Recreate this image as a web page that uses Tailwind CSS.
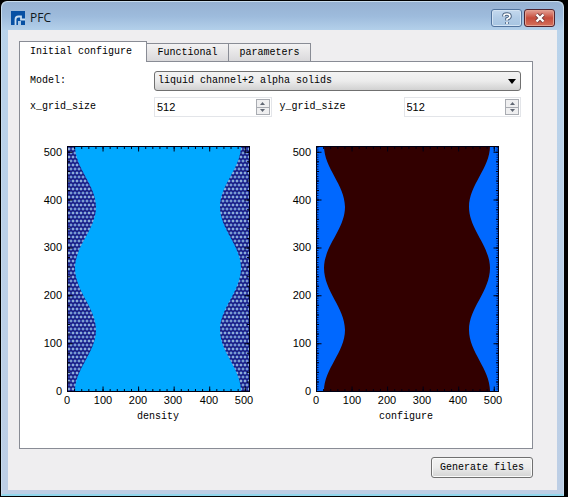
<!DOCTYPE html>
<html lang="en">
<head>
<meta charset="utf-8">
<title>PFC</title>
<script src="https://cdn.jsdelivr.net/npm/@tailwindcss/browser@4"></script>
</head>
<body class="bg-black font-['Liberation_Mono',monospace] text-[10px] leading-4 text-black">
<svg class="absolute size-0" aria-hidden="true">
  <defs>
    <pattern id="lattice" width="4" height="8" patternUnits="userSpaceOnUse" x="37" y="11">
      <rect width="4" height="8" fill="#141c70"/>
      <path d="M1 0H3V1H1ZM0 1H1V3H0ZM3 1H4V3H3ZM1 3H3V4H1Z" fill="#2c48a8"/>
      <rect x="1" y="1" width="2" height="2" fill="#9cc4dc"/>
      <path d="M0 4H1V5H0ZM3 4H4V5H3ZM1 5H3V7H1ZM0 7H1V8H0ZM3 7H4V8H3Z" fill="#2c48a8"/>
      <path d="M0 5H1V7H0ZM3 5H4V7H3Z" fill="#86b0d4"/>
    </pattern>
    <path id="solids" d="M37 10H45C45 32 66 49 66 71C66 93 45 110 45 132C45 155 66 172 66 194C66 216 45 233 45 255H37ZM219 10H211C211 32 190 49 190 71C190 93 211 110 211 132C211 155 190 172 190 194C190 216 211 233 211 255H219Z"/>
    <g id="axes" fill="none" stroke="#000014">
      <path d="M37.500 257V10M219.500 257V10" stroke-width="5" stroke-dasharray="1 8.570" stroke-dashoffset="-1"/>
      <path d="M37.500 257V10M219.500 257V10" stroke-width="10" stroke-dasharray="1 46.850" stroke-dashoffset="-1"/>
      <path d="M37 10.500H219M37 255.500H219" stroke-width="5" stroke-dasharray="1 6.110"/>
      <path d="M37 10.500H219M37 255.500H219" stroke-width="10" stroke-dasharray="1 34.550"/>
    </g>
    <clipPath id="frame"><rect x="37" y="10" width="183" height="246"/></clipPath>
    <g id="labels" font-family="Liberation Sans, Arial, sans-serif" font-size="11">
      <g text-anchor="end">
        <text x="32" y="20">500</text><text x="32" y="68">400</text><text x="32" y="115">300</text>
        <text x="32" y="163">200</text><text x="32" y="211">100</text><text x="32" y="259">0</text>
      </g>
      <g text-anchor="middle">
        <text x="37" y="268">0</text><text x="73" y="268">100</text><text x="108" y="268">200</text>
        <text x="143" y="268">300</text><text x="179" y="268">400</text><text x="214" y="268">500</text>
      </g>
    </g>
  </defs>
</svg>

<div class="mt-px mr-[4px] ml-px flex min-h-[calc(100vh-2px)] flex-col rounded-t-md border border-b-2 border-[#c8dced] border-b-[#91d7ed] bg-linear-to-b from-[#b9d3eb] to-[#bdcee5] px-[6px] pb-1">
  <header class="-mx-[6px] flex h-7 items-center rounded-t-md bg-linear-to-b from-[#96b1d2] via-[#9dbbdc] to-[#b3d0ea] pr-2 pl-[9px]">
    <svg class="mt-[4px] size-[14px]" viewBox="0 0 14 14" aria-hidden="true">
      <path d="M0 0H14V14H0Z" fill="#0750a3"/>
      <path d="M4.500 14V8.500Q4.500 5.500 7.500 5.500H10V8.500H14" fill="none" stroke="#c6dcf0" stroke-width="1.800"/>
      <path d="M7 10H10V14H7Z" fill="#a9c8e6"/>
    </svg>
    <h1 class="mt-1 ml-[5px] font-['Open_Sans',sans-serif] text-xs text-[#101820]">PFC</h1>
    <div class="mt-1 ml-auto flex gap-[2px]">
      <button type="button" aria-label="Help" class="flex h-[18px] w-[31px] items-center justify-center rounded-[3px] border border-[#52749e] bg-linear-to-b from-[#c5d9ee] via-[#b1cbe6] via-50% to-[#a7c5e2] shadow-[inset_0_0_0_1px_#d3e3f3]">
        <svg class="h-[13px] w-[10px]" viewBox="0 0 10 13" fill="none" aria-hidden="true">
          <path d="M2 4.500V3.500Q2 2 5 2T8 4.500Q8 6 5 7V8.500M5 10V12" stroke="#48607f" stroke-width="3.500"/>
          <path d="M2 4.500V3.500Q2 2 5 2T8 4.500Q8 6 5 7V8.500M5 10V12" stroke="#fff" stroke-width="1.700"/>
        </svg>
      </button>
      <button type="button" aria-label="Close" class="flex h-[18px] w-[31px] items-center justify-center rounded-[3px] border border-[#50232e] bg-linear-to-b from-[#e3a096] via-[#c54b3b] via-50% to-[#d5705c] shadow-[inset_0_0_0_1px_#e3a090]">
        <svg class="h-[10px] w-3" viewBox="0 0 12 10" fill="none" aria-hidden="true">
          <path d="M2.500 1.500L9.500 8.500M9.500 1.500L2.500 8.500" stroke="#713d40" stroke-width="4"/>
          <path d="M2.500 1.500L9.500 8.500M9.500 1.500L2.500 8.500" stroke="#fff" stroke-width="2.400"/>
        </svg>
      </button>
    </div>
  </header>

  <main class="flex flex-1 flex-col bg-[#efeef0] pt-[11px] pr-6 pb-3 pl-[11px]">
    <div role="tablist" class="flex items-end">
      <button type="button" role="tab" aria-selected="true" class="relative -mb-px h-[21px] w-32 border border-b-0 border-[#898c95] bg-white pr-1">Initial configure</button>
      <button type="button" role="tab" aria-selected="false" class="h-[18px] w-[82px] border border-b-0 border-l-0 border-[#898c95] bg-linear-to-b from-[#f3f2f3] to-[#dad9db]">Functional</button>
      <button type="button" role="tab" aria-selected="false" class="h-[18px] w-[82px] border border-b-0 border-l-0 border-[#898c95] bg-linear-to-b from-[#f3f2f3] to-[#dad9db]">parameters</button>
    </div>

    <section role="tabpanel" class="flex-1 border border-[#898c95] bg-white pt-[9px] pr-[11px] pl-[10px]">
      <form class="grid grid-cols-[124px_minmax(0,1fr)_132px_minmax(0,1fr)] items-center gap-y-[6px]">
        <label for="model">Model:</label>
        <div class="relative col-span-3">
          <select id="model" class="block h-5 w-full appearance-none rounded-[3px] border border-[#707070] bg-linear-to-b from-[#f3f3f3] via-[#ececec] to-[#d1d1d1] px-[3px]">
            <option>liquid channel+2 alpha solids</option>
          </select>
          <svg class="pointer-events-none absolute top-2 right-[5px] h-[5px] w-2" viewBox="0 0 8 5" aria-hidden="true"><path d="M0 0H8L4 5Z"/></svg>
        </div>
        <label for="xgrid">x_grid_size</label>
        <div class="flex h-5 border border-[#e3e5e9] bg-white">
          <input id="xgrid" type="text" inputmode="numeric" value="512" class="min-w-0 flex-1 px-[2px] font-['Liberation_Sans',Arial,sans-serif] text-[11px] outline-none">
          <div class="mr-px flex w-[14px] flex-col py-px">
            <button type="button" aria-label="Increase x_grid_size" class="flex flex-1 items-center justify-center border border-[#a9acb2] bg-[#efeff0]"><svg class="h-[3px] w-[5px]" viewBox="0 0 5 3"><path d="M0 3L2.500 0L5 3Z" fill="#606773"/></svg></button>
            <button type="button" aria-label="Decrease x_grid_size" class="flex flex-1 items-center justify-center border border-t-0 border-[#a9acb2] bg-[#efeff0]"><svg class="h-[3px] w-[5px]" viewBox="0 0 5 3"><path d="M0 0H5L2.500 3Z" fill="#606773"/></svg></button>
          </div>
        </div>
        <label for="ygrid" class="pl-2">y_grid_size</label>
        <div class="flex h-5 border border-[#e3e5e9] bg-white">
          <input id="ygrid" type="text" inputmode="numeric" value="512" class="min-w-0 flex-1 px-[2px] font-['Liberation_Sans',Arial,sans-serif] text-[11px] outline-none">
          <div class="mr-px flex w-[14px] flex-col py-px">
            <button type="button" aria-label="Increase y_grid_size" class="flex flex-1 items-center justify-center border border-[#a9acb2] bg-[#efeff0]"><svg class="h-[3px] w-[5px]" viewBox="0 0 5 3"><path d="M0 3L2.500 0L5 3Z" fill="#606773"/></svg></button>
            <button type="button" aria-label="Decrease y_grid_size" class="flex flex-1 items-center justify-center border border-t-0 border-[#a9acb2] bg-[#efeff0]"><svg class="h-[3px] w-[5px]" viewBox="0 0 5 3"><path d="M0 0H5L2.500 3Z" fill="#606773"/></svg></button>
          </div>
        </div>
      </form>

      <div class="mt-[19px] grid grid-cols-2 gap-[7px]">
        <svg class="h-auto w-full" viewBox="0 0 242 290" role="img" aria-label="density">
          <rect x="37" y="10" width="182" height="245" fill="#00a8ff"/>
          <use href="#solids" fill="url(#lattice)"/>
          <use href="#solids" fill="#4a28b0" fill-opacity=".15"/>
          <use href="#axes" clip-path="url(#frame)"/>
          <rect x="37.500" y="10.500" width="182" height="245" fill="none" stroke="#000014"/>
          <use href="#labels"/>
          <text x="128" y="283" text-anchor="middle" font-size="10">density</text>
        </svg>
        <svg class="h-auto w-full" viewBox="0 0 242 290" role="img" aria-label="configure">
          <rect x="37" y="10" width="182" height="245" fill="#320000"/>
          <use href="#solids" fill="#0068ff"/>
          <path d="M37.500 256V10M219.500 256V10" fill="none" stroke="#001050" stroke-width="4" stroke-dasharray="1 1.390" clip-path="url(#frame)"/>
          <use href="#axes" clip-path="url(#frame)"/>
          <rect x="37.500" y="10.500" width="182" height="245" fill="none" stroke="#000014"/>
          <use href="#labels"/>
          <text x="127" y="283" text-anchor="middle" font-size="10">configure</text>
        </svg>
      </div>
    </section>

    <button type="button" class="mt-2 h-[21px] self-end rounded-[3px] border border-[#707070] bg-linear-to-b from-[#f3f3f3] via-[#ebebeb] to-[#d3d3d3] px-[8px] shadow-[inset_0_0_0_1px_#fafafa]">Generate files</button>
  </main>
</div>
</body>
</html>
